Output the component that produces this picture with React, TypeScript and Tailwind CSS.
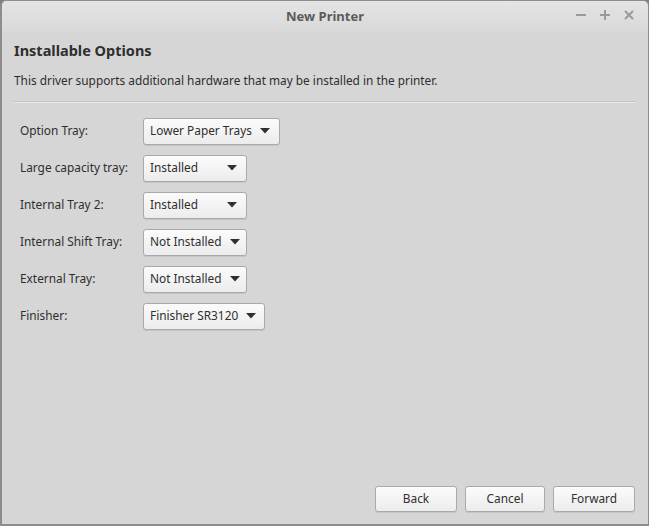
import React from 'react';

const rows = [
  { label: 'Option Tray:', value: 'Lower Paper Trays', width: 'w-[137px]' },
  { label: 'Large capacity tray:', value: 'Installed', width: 'w-[104px]' },
  { label: 'Internal Tray 2:', value: 'Installed', width: 'w-[104px]' },
  { label: 'Internal Shift Tray:', value: 'Not Installed', width: 'w-[104px]' },
  { label: 'External Tray:', value: 'Not Installed', width: 'w-[104px]' },
  { label: 'Finisher:', value: 'Finisher SR3120', width: 'w-[122px]' },
];

function Combo({ value, width }: { value: string; width: string }) {
  return (
    <div
      className={`${width} h-[27px] flex items-center justify-between whitespace-nowrap pl-[6px] pr-[9px] rounded-[3px] border border-[#a9a9a9] bg-gradient-to-b from-[#fbfbfb] to-[#ececec] shadow-[0_1px_0_rgba(0,0,0,0.08)] text-[#2f2f2f]`}
    >
      <span>{value}</span>
      <svg width="10" height="6" viewBox="0 0 10 6" className="ml-2 shrink-0">
        <path d="M0 0 L10 0 L5 5.5 Z" fill="#303030" />
      </svg>
    </div>
  );
}

function Btn({ label, width }: { label: string; width: string }) {
  return (
    <button
      className={`${width} h-[26px] rounded-[3px] border border-[#a9a9a9] bg-gradient-to-b from-[#fbfbfb] to-[#ececec] shadow-[0_1px_0_rgba(0,0,0,0.08)] text-[#2f2f2f]`}
    >
      {label}
    </button>
  );
}

export default function App() {
  return (
    <div
      className="w-[649px] h-[526px] bg-[#7e7e7e] text-[11.85px]"
      style={{ fontFamily: '"Noto Sans", sans-serif' }}
    >
      <div className="w-full h-full flex flex-col rounded-t-[6px] overflow-hidden border-l-2 border-r border-b-2 border-t border-[#8d8d8d] bg-[#d6d6d6]">
        {/* Title bar */}
        <div className="h-[31px] shrink-0 relative flex items-center justify-center bg-gradient-to-b from-[#e4e4e4] to-[#d9d9d9]">
          <span className="font-bold text-[#5b5b5b] text-[13px]">New Printer</span>
          <div className="absolute right-[14px] top-[9px] flex items-center gap-[14px]">
            <svg width="10" height="10" viewBox="0 0 10 10">
              <rect x="0" y="4" width="10" height="2" fill="#9a9a9a" />
            </svg>
            <svg width="10" height="10" viewBox="0 0 10 10">
              <rect x="0" y="4" width="10" height="2" fill="#9a9a9a" />
              <rect x="4" y="0" width="2" height="10" fill="#9a9a9a" />
            </svg>
            <svg width="10" height="10" viewBox="0 0 10 10">
              <path d="M1 1 L9 9 M9 1 L1 9" stroke="#9a9a9a" strokeWidth="2" />
            </svg>
          </div>
        </div>

        {/* Body */}
        <div className="flex-1 flex flex-col px-[12px]">
          <div className="mt-[8px] font-bold text-[14.5px] text-[#2e2e2e]">Installable Options</div>
          <div className="mt-[10px] text-[#2e2e2e]">
            This driver supports additional hardware that may be installed in the printer.
          </div>
          <div className="mt-[11px] h-[1px] bg-[#c4c4c4] shadow-[0_1px_0_#e8e8e8]" />

          <div className="mt-[16px] flex flex-col gap-[10px] pl-[6px]">
            {rows.map((r) => (
              <div key={r.label} className="flex items-center">
                <span className="w-[123px] text-[#2e2e2e]">{r.label}</span>
                <Combo value={r.value} width={r.width} />
              </div>
            ))}
          </div>

          <div className="mt-auto mb-[12px] flex justify-end gap-[8px] pr-[1px]">
            <Btn label="Back" width="w-[82px]" />
            <Btn label="Cancel" width="w-[80px]" />
            <Btn label="Forward" width="w-[82px]" />
          </div>
        </div>
      </div>
    </div>
  );
}
